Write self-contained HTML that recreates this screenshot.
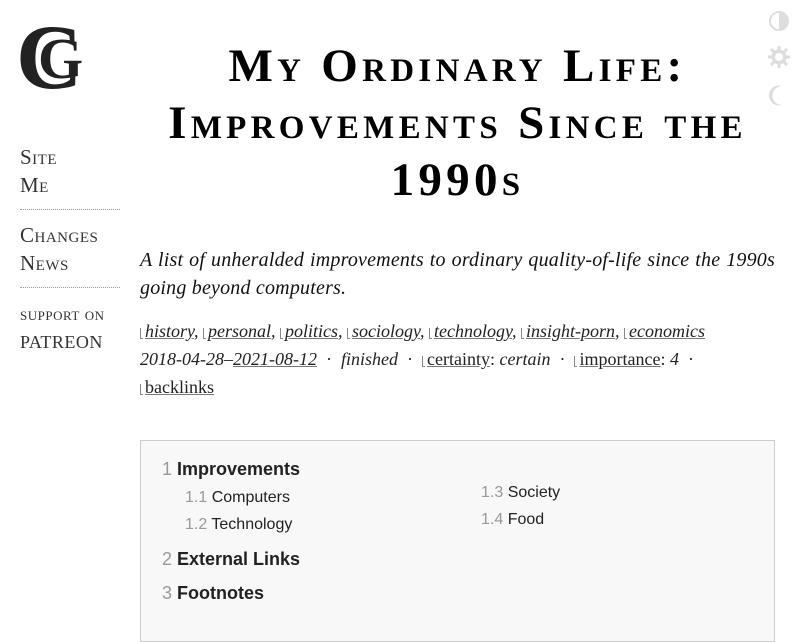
<!DOCTYPE html>
<html><head><meta charset="utf-8"><style>
body{margin:0;background:#fff;width:800px;height:600px;overflow:hidden;position:relative;font-family:"Liberation Serif",serif;color:#000}
.logo{position:absolute;left:18px;top:16px;width:68px;height:82px}
.nav{position:absolute;left:20px;top:143px;width:100px;font-variant:small-caps;font-size:21px;color:#333;line-height:28px;letter-spacing:0.5px}
.nav hr{border:0;border-top:1px dotted #999;margin:10px 0 11px}
.nav .sup{font-size:18px;line-height:26px}
h1{position:absolute;left:140px;width:635px;top:38px;margin:0;text-align:center;font-variant:small-caps;font-weight:bold;font-size:47px;line-height:57px;letter-spacing:4.3px}
.abs{position:absolute;left:140px;top:246px;width:635px;font-style:italic;font-size:20px;line-height:28px;text-align:justify;color:#111;letter-spacing:0.2px}
.meta{position:absolute;left:140px;top:317px;width:640px;font-size:18px;line-height:28px;color:#222}
.meta u{text-decoration:underline;text-decoration-color:#777}
.meta i{font-style:italic}
.bar{display:inline-block;height:10px;border-left:1px solid #888;border-bottom:1px solid #888;width:2px;margin-right:2px;vertical-align:-2px}
.toc{position:absolute;left:140px;top:440px;width:633px;height:200px;background:#f8f8f8;border:1px solid #ccc;font-family:"Liberation Sans",sans-serif;color:#222}
.toc div{position:absolute;white-space:nowrap}
.toc .n{color:#999;font-weight:normal}
.t1{font-size:18px;font-weight:bold}
.t2{font-size:16px}
.icons{position:absolute;left:768px;top:10px;color:#ddd}
</style></head><body>
<svg class="logo" viewBox="0 0 68 82"><text x="-2" y="72" font-family="Liberation Serif" font-size="92" font-weight="bold" fill="#222">C</text><text x="20" y="62" font-family="Liberation Serif" font-size="58" font-weight="bold" fill="#222">G</text></svg>
<div class="nav">Site<br>Me<hr>Changes<br>News<hr><span class="sup">support on<br>PATREON</span></div>
<h1>My Ordinary Life:<br>Improvements Since the<br>1990s</h1>
<div class="abs">A list of unheralded improvements to ordinary quality-of-life since the 1990s going beyond computers.</div>
<div class="meta"><i><span class="bar"></span><u>history</u>, <span class="bar"></span><u>personal</u>, <span class="bar"></span><u>politics</u>, <span class="bar"></span><u>sociology</u>, <span class="bar"></span><u>technology</u>, <span class="bar"></span><u>insight-porn</u>, <span class="bar"></span><u>economics</u></i><br><i>2018-04-28–<u>2021-08-12</u></i> &nbsp;·&nbsp; <i>finished</i> &nbsp;·&nbsp; <span class="bar"></span><u>certainty</u>: <i>certain</i> &nbsp;·&nbsp; <span class="bar"></span><u>importance</u>: <i>4</i> &nbsp;·<br><span class="bar"></span><u>backlinks</u></div>
<div class="toc">
<div class="t1" style="left:21px;top:18px"><span class="n">1</span> Improvements</div>
<div class="t2" style="left:44px;top:48px"><span class="n">1.1</span> Computers</div>
<div class="t2" style="left:44px;top:75px"><span class="n">1.2</span> Technology</div>
<div class="t2" style="left:340px;top:43px"><span class="n">1.3</span> Society</div>
<div class="t2" style="left:340px;top:70px"><span class="n">1.4</span> Food</div>
<div class="t1" style="left:21px;top:108px"><span class="n">2</span> External Links</div>
<div class="t1" style="left:21px;top:142px"><span class="n">3</span> Footnotes</div>
</div>
<svg class="icons" width="24" height="100" viewBox="0 0 24 100"><circle cx="11" cy="11" r="9" fill="none" stroke="#ddd" stroke-width="2"/><path d="M11 2a9 9 0 0 1 0 18z" fill="#ddd"/><circle cx="11" cy="47" r="6" fill="none" stroke="#ddd" stroke-width="3"/><g stroke="#ddd" stroke-width="3"><line x1="11" y1="36" x2="11" y2="58"/><line x1="0" y1="47" x2="22" y2="47"/><line x1="3" y1="39" x2="19" y2="55"/><line x1="19" y1="39" x2="3" y2="55"/></g><circle cx="11" cy="47" r="4" fill="#fff"/><path d="M14 76a10 10 0 1 0 0 19a9 9 0 0 1 0-19z" fill="#ddd"/></svg>
</body></html>
